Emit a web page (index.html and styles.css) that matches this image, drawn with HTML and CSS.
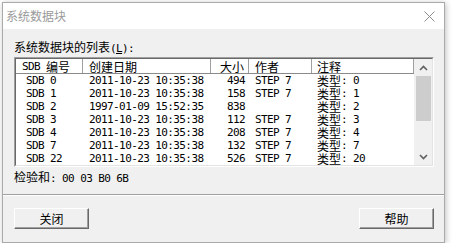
FILE: index.html
```html
<!DOCTYPE html>
<html lang="zh-CN">
<head>
  <meta charset="UTF-8">
  <title>系统数据块</title>
  <link rel="stylesheet" href="styles.css">
</head>
<body>
  <div class="window">
    <div class="titlebar">
      <span class="title">系统数据块</span>
      <svg class="close" width="11" height="11" viewBox="0 0 11 11">
        <path d="M0.5 0.5 L10.5 10.5 M10.5 0.5 L0.5 10.5" stroke="#8c8c8c" stroke-width="1" fill="none"/>
      </svg>
    </div>

    <div class="main">
      <div class="label">系统数据块的列表<span class="m">(<u>L</u>):</span></div>

      <div class="list">
        <div class="list-inner">
          <div class="table">
            <div class="head">
              <div class="c1"><span class="m sdb">SDB</span><span class="zh">编号</span></div>
              <div class="c2"><span class="zh">创建日期</span></div>
              <div class="c3"><span class="zh">大小</span></div>
              <div class="c4"><span class="zh">作者</span></div>
              <div class="c5"><span class="zh">注释</span></div>
            </div>
            <div class="row"><div class="c1">SDB 0</div><div class="c2">2011-10-23 10:35:38</div><div class="c3">494</div><div class="c4">STEP 7</div><div class="c5"><span class="zh">类型</span>: 0</div></div>
            <div class="row"><div class="c1">SDB 1</div><div class="c2">2011-10-23 10:35:38</div><div class="c3">158</div><div class="c4">STEP 7</div><div class="c5"><span class="zh">类型</span>: 1</div></div>
            <div class="row"><div class="c1">SDB 2</div><div class="c2">1997-01-09 15:52:35</div><div class="c3">838</div><div class="c4"></div><div class="c5"><span class="zh">类型</span>: 2</div></div>
            <div class="row"><div class="c1">SDB 3</div><div class="c2">2011-10-23 10:35:38</div><div class="c3">112</div><div class="c4">STEP 7</div><div class="c5"><span class="zh">类型</span>: 3</div></div>
            <div class="row"><div class="c1">SDB 4</div><div class="c2">2011-10-23 10:35:38</div><div class="c3">208</div><div class="c4">STEP 7</div><div class="c5"><span class="zh">类型</span>: 4</div></div>
            <div class="row"><div class="c1">SDB 7</div><div class="c2">2011-10-23 10:35:38</div><div class="c3">132</div><div class="c4">STEP 7</div><div class="c5"><span class="zh">类型</span>: 7</div></div>
            <div class="row"><div class="c1">SDB 22</div><div class="c2">2011-10-23 10:35:38</div><div class="c3">526</div><div class="c4">STEP 7</div><div class="c5"><span class="zh">类型</span>: 20</div></div>
          </div>
          <div class="scroll">
            <div class="arrow">
              <svg width="9" height="6" viewBox="0 0 9 6"><polyline points="1,5 4.5,1.5 8,5" stroke="#606060" stroke-width="1.6" fill="none"/></svg>
            </div>
            <div class="thumb"></div>
            <div class="track"></div>
            <div class="arrow">
              <svg width="9" height="6" viewBox="0 0 9 6"><polyline points="1,1 4.5,4.5 8,1" stroke="#606060" stroke-width="1.6" fill="none"/></svg>
            </div>
          </div>
        </div>
      </div>

      <div class="checksum">检验和<span class="m">: 00 03 B0 6B</span></div>
    </div>

    <div class="footer">
      <button class="btn">关闭</button>
      <button class="btn">帮助</button>
    </div>
  </div>
</body>
</html>
```

FILE: styles.css
```css
body {
  margin: 0;
  background: #fff;
  font-family: "Noto Sans CJK SC", sans-serif;
  font-size: 12px;
  color: #000;
}
.window {
  margin: 2px 0 0 2px;
  width: 441px;
  height: 239px;
  border: 1px solid #aaa;
  box-shadow: 1px 1px 6px rgba(0, 0, 0, 0.25);
  background: #f0f0f0;
  display: flex;
  flex-direction: column;
}
.titlebar {
  height: 26px;
  background: #fff;
  display: flex;
  align-items: center;
  justify-content: space-between;
  padding: 0 9px 0 3px;
}
.title {
  color: #9a9a9a;
  line-height: 14px;
}
.main {
  padding: 11px 10px 10px 11px;
}
.label, .checksum {
  height: 14px;
  line-height: 14px;
}
.m {
  font-family: "DejaVu Sans Mono", monospace;
  font-size: 11px;
  letter-spacing: -0.6px;
  white-space: pre;
}
.zh {
  font-family: "Noto Sans CJK SC", sans-serif;
  font-size: 12px;
  letter-spacing: 0;
}
.sdb {
  margin-right: 6px;
}
.checksum {
  margin-top: 3px;
}
.list {
  margin-top: 3px;
  border: 1px solid;
  border-color: #a0a0a0 #fff #fff #a0a0a0;
}
.list-inner {
  border: 1px solid;
  border-color: #696969 #e3e3e3 #e3e3e3 #696969;
  background: #fff;
  display: flex;
  font-family: "DejaVu Sans Mono", monospace;
  font-size: 11px;
  letter-spacing: -0.6px;
}
.table {
  flex: 1;
}
.head, .row {
  display: grid;
  grid-template-columns: 67px 128px 38px 63px 102px;
  white-space: pre;
}
.head {
  height: 15px;
  box-sizing: border-box;
  border-bottom: 1px solid #8a8a8a;
}
.head > div {
  border-right: 1px solid #a0a0a0;
}
.row {
  height: 13px;
}
.head > div, .row > div {
  box-sizing: border-box;
  display: flex;
  align-items: center;
  line-height: 13px;
}
.head .c1 { padding-left: 6px; }
.row .c1 { padding-left: 10px; }
.c2, .c4 { padding-left: 6px; }
.c3 { justify-content: flex-end; padding-right: 4px; }
.c5 { padding-left: 5px; }
.scroll {
  width: 18px;
  background: #f0f0f0;
  display: flex;
  flex-direction: column;
}
.arrow {
  height: 17px;
  display: flex;
  align-items: center;
  justify-content: center;
}
.thumb {
  height: 45px;
  width: 15px;
  margin-left: 2px;
  background: #cdcdcd;
}
.track {
  flex: 1;
}
.footer {
  flex: 1;
  display: flex;
  justify-content: space-between;
  align-items: flex-start;
  padding: 13px 10px 0 11px;
  border-top: 1px solid #a0a0a0;
  box-shadow: inset 0 1px #fff;
}
.btn {
  width: 75px;
  height: 21px;
  padding: 0;
  font-family: "Noto Sans CJK SC", sans-serif;
  font-size: 12px;
  color: #000;
  background: #f0f0f0;
  border: 1px solid;
  border-color: #fff #696969 #696969 #fff;
  box-shadow: inset -1px -1px #a0a0a0;
}
```
